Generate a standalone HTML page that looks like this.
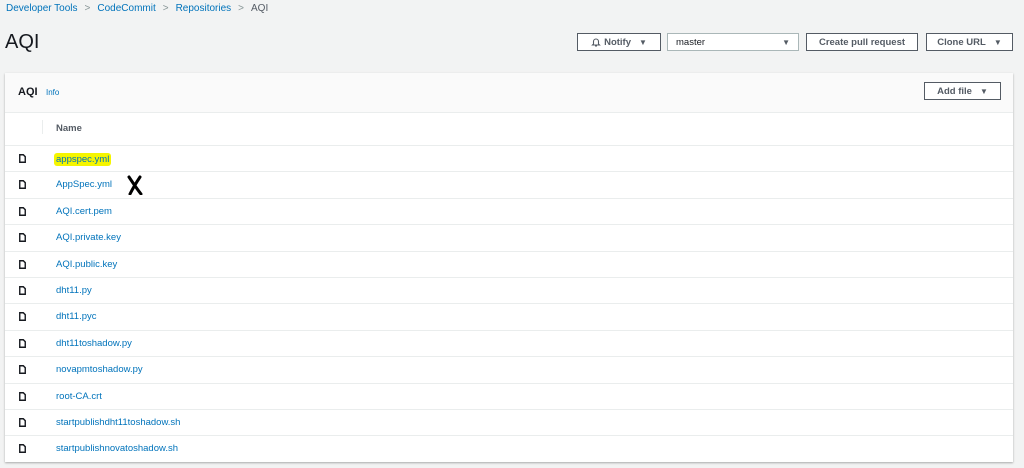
<!DOCTYPE html><html><head><style>
body{margin:0;width:1024px;height:468px;background:#f2f3f3;font-family:"Liberation Sans",sans-serif;position:relative;overflow:hidden}
.a{position:absolute}
.bc{top:3px;left:6px;font-size:10px;color:#0073bb}
.bc span.s{color:#879596;margin:0 7px}
.btn{position:absolute;top:33px;height:18px;border:1px solid #545b64;background:#fff;font-size:9.5px;font-weight:bold;color:#545b64;display:flex;align-items:center;justify-content:center;box-sizing:border-box}
.tri{font-size:8px;margin-left:8px}
.panel{left:5px;top:73px;width:1008px;height:389px;background:#fff;box-shadow:0 1px 2px rgba(0,0,0,.3)}
.hd{height:39px;background:#fafafa;border-bottom:1px solid #eaeded}
.row{position:absolute;left:0;width:1008px;height:26px;border-top:1px solid #eaeded;font-size:9.5px;color:#0073bb}
.row span{position:absolute;left:51px;top:7px}
.ic{position:absolute;left:14px;top:8px;width:7px;height:9px}
</style></head><body>
<div class="a bc">Developer Tools<span class="s">&gt;</span>CodeCommit<span class="s">&gt;</span>Repositories<span class="s">&gt;</span><span style="color:#545b64">AQI</span></div>
<div class="a" style="left:5px;top:31px;font-size:20px;color:#16191f">AQI</div>
<div class="btn" style="left:577px;width:84px"><svg width="10" height="10" viewBox="0 0 10 10" style="margin-right:3px"><path d="M2.5 7V4.5A2.5 2.5 0 0 1 7.5 4.5V7L8.5 8H1.5Z M4 9H6" fill="none" stroke="#545b64" stroke-width="1.1"/></svg>Notify<span class="tri">▼</span></div>
<div class="btn" style="left:667px;width:132px;border-color:#aab7b8;justify-content:space-between;padding:0 8px;font-weight:normal;color:#16191f">master<span class="tri" style="color:#545b64">▼</span></div>
<div class="btn" style="left:806px;width:112px">Create pull request</div>
<div class="btn" style="left:926px;width:87px">Clone URL<span class="tri">▼</span></div>
<div class="a panel">
<div class="hd"><span class="a" style="left:13px;top:13px;font-size:11px;font-weight:bold;color:#16191f">AQI</span><span class="a" style="left:41px;top:15px;font-size:8px;color:#0073bb">Info</span>
<div class="btn" style="left:919px;top:9px;width:77px">Add file<span class="tri">▼</span></div></div>
<div class="a" style="left:37px;top:47px;width:1px;height:14px;background:#eaeded"></div>
<div class="a" style="left:51px;top:50px;font-size:9.5px;font-weight:bold;color:#545b64">Name</div>
<div id="rows"></div>
</div>
<script>
var n=["appspec.yml","AppSpec.yml","AQI.cert.pem","AQI.private.key","AQI.public.key","dht11.py","dht11.pyc","dht11toshadow.py","novapmtoshadow.py","root-CA.crt","startpublishdht11toshadow.sh","startpublishnovatoshadow.sh"],h="";
n.forEach(function(t,i){var y=72+i*26.4;
h+='<div class="row" style="top:'+y+'px"><svg class="ic" viewBox="0 0 7 9"><path d="M0.75 0.75H4.3L6.25 2.7V8.25H0.75Z" fill="none" stroke="#16191f" stroke-width="1.4"/></svg><span'+(i==0?' style="background:#f5f500;padding:1px 2px;margin-left:-2px;border-radius:3px"':'')+'>'+t+'</span>'+(i==1?'<svg style="position:absolute;left:122px;top:3px" width="16" height="20" viewBox="0 0 16 20"><path d="M2 2C6 8 10 14 14 19M13 2C9 8 6 13 3 19" fill="none" stroke="#000" stroke-width="3" stroke-linecap="round"/></svg>':'')+'</div>'});
document.getElementById('rows').innerHTML=h;
</script>
</body></html>
